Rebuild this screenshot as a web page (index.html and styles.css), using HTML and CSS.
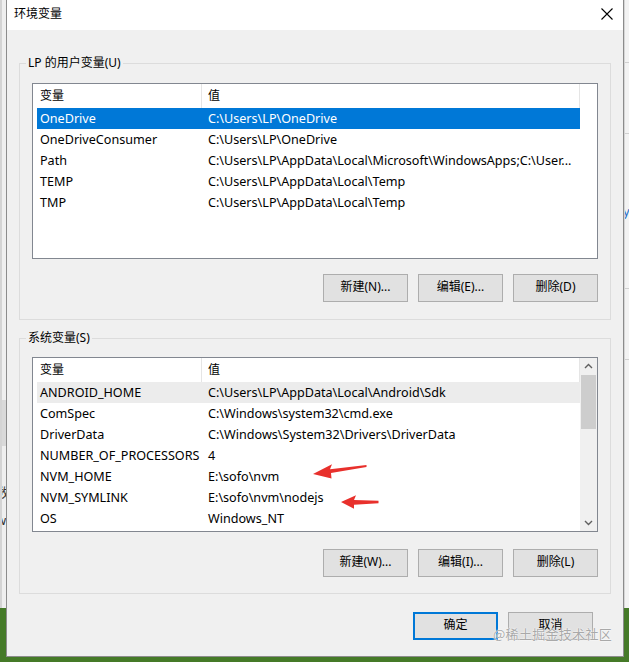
FILE: index.html
```html
<!DOCTYPE html>
<html lang="zh-CN">
<head>
<meta charset="utf-8">
<title>环境变量</title>
<link rel="stylesheet" href="styles.css">
</head>
<body>
<div class="desk">
  <div class="edge-left">
    <div class="edge-block"></div>
    <div class="edge-text">数</div>
    <div class="edge-text">w</div>
    <div class="edge-text">:</div>
  </div>

  <div class="dialog">
    <div class="titlebar">
      <span class="title">环境变量</span>
      <svg class="close" width="12" height="12" viewBox="0 0 12 12"><path d="M0.5 0.5 L11.5 11.5 M11.5 0.5 L0.5 11.5" stroke="#000" stroke-width="1.1" fill="none"/></svg>
    </div>

    <div class="content">
      <fieldset class="group group-user">
        <legend>LP 的用户变量(U)</legend>
        <div class="list list-user">
          <div class="table">
            <div class="thead">
              <div class="th th-name">变量</div>
              <div class="th th-value">值</div>
            </div>
            <div class="row selected"><div class="td">OneDrive</div><div class="td val">C:\Users\LP\OneDrive</div></div>
            <div class="row"><div class="td">OneDriveConsumer</div><div class="td val">C:\Users\LP\OneDrive</div></div>
            <div class="row"><div class="td">Path</div><div class="td val">C:\Users\LP\AppData\Local\Microsoft\WindowsApps;C:\User...</div></div>
            <div class="row"><div class="td">TEMP</div><div class="td val">C:\Users\LP\AppData\Local\Temp</div></div>
            <div class="row"><div class="td">TMP</div><div class="td val">C:\Users\LP\AppData\Local\Temp</div></div>
          </div>
        </div>
        <div class="btnrow">
          <button class="btn">新建(N)...</button>
          <button class="btn">编辑(E)...</button>
          <button class="btn">删除(D)</button>
        </div>
      </fieldset>

      <fieldset class="group group-sys">
        <legend>系统变量(S)</legend>
        <div class="list list-sys">
          <div class="table">
            <div class="thead">
              <div class="th th-name">变量</div>
              <div class="th th-value">值</div>
            </div>
            <div class="row hover"><div class="td">ANDROID_HOME</div><div class="td val">C:\Users\LP\AppData\Local\Android\Sdk</div></div>
            <div class="row"><div class="td">ComSpec</div><div class="td val">C:\Windows\system32\cmd.exe</div></div>
            <div class="row"><div class="td">DriverData</div><div class="td val">C:\Windows\System32\Drivers\DriverData</div></div>
            <div class="row"><div class="td">NUMBER_OF_PROCESSORS</div><div class="td val">4</div></div>
            <div class="row"><div class="td">NVM_HOME</div><div class="td val">E:\sofo\nvm</div></div>
            <div class="row"><div class="td">NVM_SYMLINK</div><div class="td val">E:\sofo\nvm\nodejs</div></div>
            <div class="row"><div class="td">OS</div><div class="td val">Windows_NT</div></div>
          </div>
          <div class="scrollbar">
            <svg class="chev" width="17" height="17" viewBox="0 0 17 17"><path d="M5 10 L8.5 6.5 L12 10" stroke="#606060" stroke-width="1.4" fill="none"/></svg>
            <div class="track"><div class="thumb"></div></div>
            <svg class="chev" width="17" height="17" viewBox="0 0 17 17"><path d="M5 7 L8.5 10.5 L12 7" stroke="#606060" stroke-width="1.4" fill="none"/></svg>
          </div>
        </div>
        <div class="btnrow btnrow-sys">
          <button class="btn">新建(W)...</button>
          <button class="btn">编辑(I)...</button>
          <button class="btn">删除(L)</button>
        </div>
      </fieldset>

      <div class="footer">
        <button class="btn btn-default">确定</button>
        <button class="btn">取消</button>
      </div>
    </div>
  </div>

  <div class="edge-right">
    <div class="edge-line"></div>
    <div class="edge-line"></div>
    <div class="edge-mark">y</div>
    <div class="edge-line"></div>
    <div class="edge-line"></div>
  </div>

  <svg class="arrows" width="629" height="662" viewBox="0 0 629 662">
    <polygon points="313,474 332,464.2 330,469.2 366.5,465 366.5,467 331,473 331.5,478.5" fill="#e8302c"/>
    <polygon points="341,502 356,495.3 354,500 378.5,500.8 378.5,503.2 354,504.8 354,508.7" fill="#e8302c"/>
  </svg>
  <div class="watermark">@稀土掘金技术社区</div>
</div>
</body>
</html>
```

FILE: styles.css
```css
* { box-sizing: border-box; }

html, body {
  margin: 0;
  padding: 0;
}

body {
  width: 629px;
  height: 662px;
  overflow: hidden;
  font-family: "Noto Sans", "Noto Sans CJK SC", sans-serif;
  font-size: 12px;
  color: #000;
}

.desk {
  position: relative;
  display: flex;
  align-items: flex-start;
  width: 629px;
  height: 662px;
  background: linear-gradient(to bottom, #efefef 0, #efefef 608px, #457a28 608px);
}

/* background window strips */
.edge-left {
  width: 6px;
  height: 608px;
  flex: none;
  overflow: hidden;
  border-left: 2px solid #d4d4d4;
  display: flex;
  flex-direction: column;
  padding-top: 400px;
}

.edge-block {
  height: 46px;
  margin-left: -2px;
  background: #d9d9d9;
  margin-bottom: 38px;
}

.edge-text {
  height: 28px;
  margin-left: -6px;
  font-size: 13px;
  line-height: 16px;
  color: #333;
}

.edge-right {
  width: 6px;
  height: 608px;
  flex: none;
  overflow: hidden;
  background: #f3f3f3;
  border-left: 1px solid #d6d6d6;
  display: flex;
  flex-direction: column;
  padding-top: 62px;
  gap: 70px;
}

.edge-line {
  height: 1px;
  background: #d0d0d0;
}

.edge-mark {
  color: #1e6fc9;
  font-size: 13px;
  line-height: 14px;
  margin-left: -2px;
}

/* dialog */
.dialog {
  width: 618px;
  height: 657px;
  flex: none;
  border: 1px solid #8c8c8c;
  border-top: none;
  background: #f0f0f0;
  display: flex;
  flex-direction: column;
}

.titlebar {
  height: 30px;
  flex: none;
  background: #fff;
  display: flex;
  align-items: center;
  justify-content: space-between;
  padding: 0 10px 3px 7px;
}

.title {
  font-size: 12px;
  line-height: 16px;
}

.close {
  display: block;
}

.content {
  display: flex;
  flex-direction: column;
  padding: 25px 12px 0 12px;
}

.group {
  margin: 0;
  padding: 0 12px 17px 12px;
  border: 1px solid #dcdcdc;
  min-width: 0;
}

.group legend {
  padding: 0 2px;
  margin-left: -6px;
  line-height: 16px;
  font-size: 12px;
}

.group-sys {
  margin-top: 10px;
  padding-bottom: 16px;
}

.list {
  margin-top: 12px;
  height: 176px;
  border: 1px solid #828790;
  background: #fff;
  display: flex;
  overflow: hidden;
}

.list-sys {
  margin-top: 11px;
  height: 175px;
}

.table {
  flex: 1;
  min-width: 0;
  display: flex;
  flex-direction: column;
}

.thead {
  height: 24px;
  flex: none;
  display: flex;
  align-items: stretch;
}

.th {
  display: flex;
  align-items: center;
  line-height: 16px;
  border-right: 1px solid #e5e5e5;
  padding-bottom: 1px;
}

.th-name {
  width: 169px;
  padding-left: 7px;
}

.th-value {
  width: 378px;
  padding-left: 6px;
}

.row {
  height: 21px;
  flex: none;
  margin-left: 4px;
  width: 543px;
  display: grid;
  grid-template-columns: 165px 378px;
  align-items: center;
  font-size: 12.6px;
}

.td {
  padding-left: 3px;
  line-height: 16px;
  white-space: nowrap;
  overflow: hidden;
}

.td.val {
  padding-left: 6px;
}

.row.selected {
  background: #0078d7;
  color: #fff;
}

.row.hover {
  background: #ececec;
}

/* scrollbar */
.scrollbar {
  width: 17px;
  flex: none;
  background: #f0f0f0;
  display: flex;
  flex-direction: column;
}

.chev {
  display: block;
  flex: none;
}

.track {
  flex: 1;
  padding: 0 1px;
}

.thumb {
  height: 54px;
  background: #cdcdcd;
}

/* buttons */
.btnrow {
  margin-top: 15px;
  display: flex;
  justify-content: flex-end;
  gap: 10px;
}

.btnrow-sys {
  margin-top: 17px;
}

.btn {
  width: 85px;
  height: 28px;
  margin: 0;
  padding: 0 0 2px;
  border: 1px solid #adadad;
  background: #e1e1e1;
  font-family: "Noto Sans", "Noto Sans CJK SC", sans-serif;
  font-size: 12px;
  line-height: 16px;
  color: #000;
}

.btn-default {
  border: 2px solid #0078d7;
}

.footer {
  margin-top: 18px;
  display: flex;
  justify-content: flex-end;
  gap: 10px;
  padding-right: 18px;
}

/* overlays */
.arrows {
  position: absolute;
  left: 0;
  top: 0;
  pointer-events: none;
}

.watermark {
  position: absolute;
  left: 493px;
  top: 625px;
  font-family: "Noto Sans CJK SC", sans-serif;
  font-size: 13px;
  line-height: 18px;
  color: #a9a9a9;
  text-shadow: 0 0 2px #fff, 0 0 1px #fff;
  letter-spacing: 0.3px;
}
```
